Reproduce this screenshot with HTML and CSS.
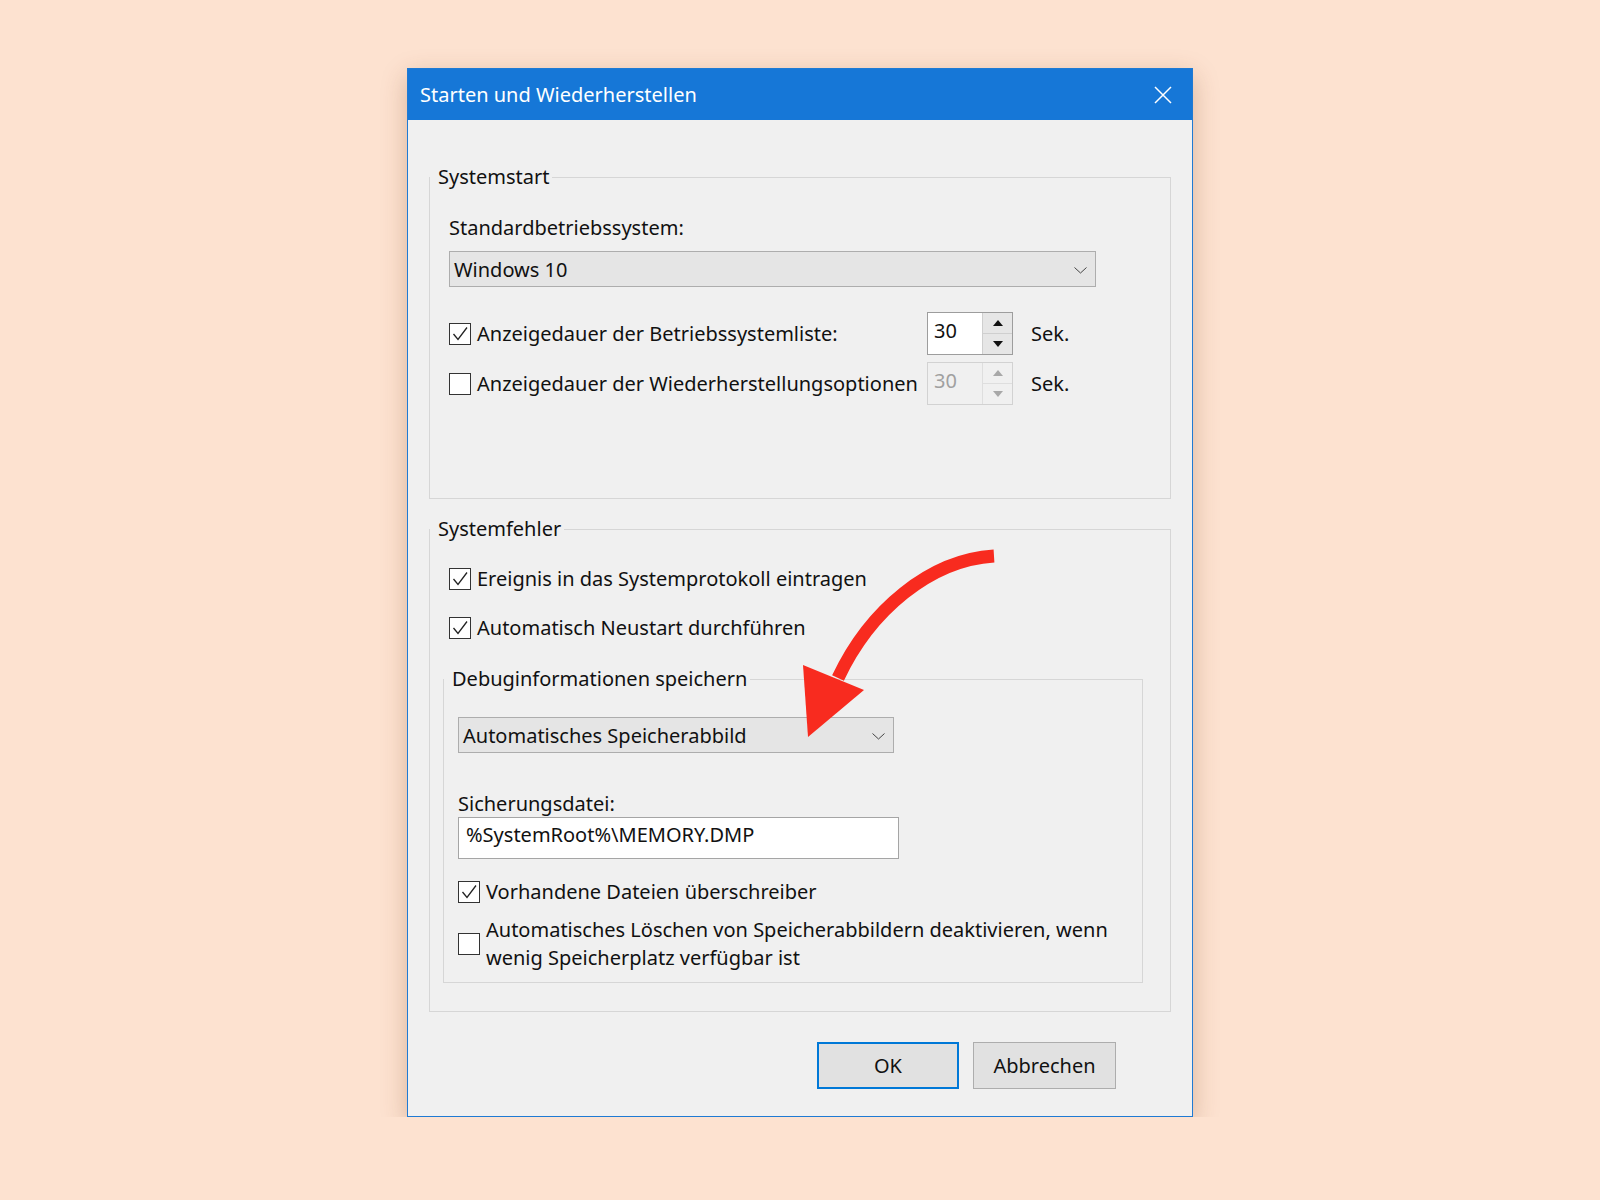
FILE: index.html
```html
<!DOCTYPE html>
<html lang="de">
<head>
    <meta charset="UTF-8">
    <meta name="viewport" content="width=device-width, initial-scale=1.0">
    <title>Starten und Wiederherstellen</title>
    <link rel="stylesheet" href="styles.css">
</head>
<body>

    <div class="dialog">
        <!-- Titelleiste -->
        <div class="titlebar">
            <span class="title">Starten und Wiederherstellen</span>
            <span class="close">
                <svg width="18" height="18" viewBox="0 0 18 18"><path d="M1 1L17 17M17 1L1 17" stroke="#fff" stroke-width="1.5" fill="none"/></svg>
            </span>
        </div>

        <div class="content">
            <!-- Systemstart -->
            <fieldset class="group group-start">
                <legend>Systemstart</legend>
                <div class="group-body">
                    <div class="field-label">Standardbetriebssystem:</div>
                    <div class="combo combo-os">
                        <span>Windows 10</span>
                        <svg class="chevron" width="13" height="7" viewBox="0 0 13 7"><path d="M0.5 0.5L6.5 6L12.5 0.5" stroke="#444" stroke-width="1" fill="none"/></svg>
                    </div>

                    <div class="timeouts">
                        <label class="check-row">
                            <span class="box"><svg width="20" height="20" viewBox="0 0 20 20"><path d="M3.5 10L8 15.5L17 3.5" stroke="#222" stroke-width="1.3" fill="none"/></svg></span>
                            <span>Anzeigedauer der Betriebssystemliste:</span>
                        </label>
                        <div class="spin">
                            <span class="spin-value">30</span>
                            <span class="spin-buttons">
                                <span class="spin-up"><svg width="10" height="6" viewBox="0 0 10 6"><path d="M5 0L10 6H0Z"/></svg></span>
                                <span class="spin-down"><svg width="10" height="6" viewBox="0 0 10 6"><path d="M0 0H10L5 6Z"/></svg></span>
                            </span>
                        </div>
                        <span class="unit">Sek.</span>

                        <label class="check-row">
                            <span class="box"></span>
                            <span>Anzeigedauer der Wiederherstellungsoptionen</span>
                        </label>
                        <div class="spin disabled">
                            <span class="spin-value">30</span>
                            <span class="spin-buttons">
                                <span class="spin-up"><svg width="10" height="6" viewBox="0 0 10 6"><path d="M5 0L10 6H0Z"/></svg></span>
                                <span class="spin-down"><svg width="10" height="6" viewBox="0 0 10 6"><path d="M0 0H10L5 6Z"/></svg></span>
                            </span>
                        </div>
                        <span class="unit">Sek.</span>
                    </div>
                </div>
            </fieldset>

            <!-- Systemfehler -->
            <fieldset class="group group-fault">
                <legend>Systemfehler</legend>
                <div class="group-body">
                    <label class="check-row">
                        <span class="box"><svg width="20" height="20" viewBox="0 0 20 20"><path d="M3.5 10L8 15.5L17 3.5" stroke="#222" stroke-width="1.3" fill="none"/></svg></span>
                        <span>Ereignis in das Systemprotokoll eintragen</span>
                    </label>
                    <label class="check-row row-gap">
                        <span class="box"><svg width="20" height="20" viewBox="0 0 20 20"><path d="M3.5 10L8 15.5L17 3.5" stroke="#222" stroke-width="1.3" fill="none"/></svg></span>
                        <span>Automatisch Neustart durchführen</span>
                    </label>

                    <fieldset class="group group-debug">
                        <legend>Debuginformationen speichern</legend>
                        <div class="group-body">
                            <div class="combo combo-debug">
                                <span>Automatisches Speicherabbild</span>
                                <svg class="chevron" width="13" height="7" viewBox="0 0 13 7"><path d="M0.5 0.5L6.5 6L12.5 0.5" stroke="#444" stroke-width="1" fill="none"/></svg>
                            </div>
                            <div class="field-label dump-label">Sicherungsdatei:</div>
                            <div class="edit">%SystemRoot%\MEMORY.DMP</div>
                            <label class="check-row overwrite">
                                <span class="box"><svg width="20" height="20" viewBox="0 0 20 20"><path d="M3.5 10L8 15.5L17 3.5" stroke="#222" stroke-width="1.3" fill="none"/></svg></span>
                                <span>Vorhandene Dateien überschreiber</span>
                            </label>
                            <label class="check-row multi">
                                <span class="box"></span>
                                <span class="text">Automatisches Löschen von Speicherabbildern deaktivieren, wenn wenig Speicherplatz verfügbar ist</span>
                            </label>
                        </div>
                    </fieldset>
                </div>
            </fieldset>
        </div>

        <div class="footer">
            <button class="btn btn-default">OK</button>
            <button class="btn">Abbrechen</button>
        </div>
    </div>

    <!-- roter Hinweispfeil -->
    <svg class="arrow" width="220" height="210" viewBox="0 0 220 210">
        <path d="M204 16C140 20 80 70 48 138" stroke="#f82b1f" stroke-width="13" fill="none"/>
        <path d="M13 125L74 150L18 197Z" fill="#f82b1f"/>
    </svg>

</body>
</html>
```

FILE: styles.css
```css
body {
    margin: 0;
    background-color: #fde2d0;
    font-family: "Noto Sans", "Open Sans", sans-serif;
    font-size: 20px;
    line-height: 24px;
    color: #111;
}

.dialog {
    width: 786px;
    margin: 68px 0 0 407px;
    box-sizing: border-box;
    border: 1px solid #1f7ad3;
    background-color: #f0f0f0;
    box-shadow: 0 8px 24px rgba(120, 60, 20, 0.28);
}

.titlebar {
    height: 51px;
    display: flex;
    align-items: center;
    justify-content: space-between;
    padding: 0 20px 0 12px;
    background-color: #1677d7;
    color: #fff;
}

.close {
    display: flex;
}

.content {
    padding: 45px 21px 0;
}

/* Gruppenrahmen */
.group {
    margin: 0;
    padding: 0;
    min-width: 0;
    border: 1px solid #d6d6d6;
}

.group legend {
    padding: 0 3px 0 8px;
    line-height: 24px;
}

.group-start .group-body {
    padding: 27px 21px 93px 19px;
}

.group-fault {
    margin-top: 18px;
}

.group-fault > .group-body {
    padding: 26px 21px 28px 19px;
}

.group-debug {
    width: 700px;
    box-sizing: border-box;
    margin: 27px 0 0 -6px;
}

.group-debug .group-body {
    padding: 0 14px 10px 14px;
}

/* Auswahlfelder */
.combo {
    display: flex;
    align-items: center;
    justify-content: space-between;
    height: 36px;
    box-sizing: border-box;
    padding: 2px 8px 0 4px;
    border: 1px solid #adadad;
    background-color: #e5e5e5;
}

.combo-os {
    width: 647px;
    margin-top: 11px;
}

.combo-debug {
    width: 436px;
    margin-top: 26px;
}

.dump-label {
    margin-top: 39px;
}

.edit {
    width: 441px;
    height: 42px;
    box-sizing: border-box;
    margin-top: 1px;
    padding: 5px 7px 0;
    border: 1px solid #a5a5a5;
    background-color: #fff;
}

/* Kontrollkästchen */
.check-row {
    display: flex;
    align-items: center;
    gap: 6px;
    white-space: nowrap;
}

.row-gap {
    margin-top: 25px;
}

.overwrite {
    margin-top: 21px;
}

.multi {
    margin-top: 12px;
    white-space: normal;
}

.multi .text {
    width: 640px;
    line-height: 28px;
}

.box {
    width: 22px;
    height: 22px;
    flex: none;
    box-sizing: border-box;
    display: flex;
    align-items: center;
    justify-content: center;
    border: 1px solid #333;
    background-color: #fff;
}

/* Anzeigedauer mit Drehfeldern */
.timeouts {
    display: grid;
    grid-template-columns: 478px 86px auto;
    grid-auto-rows: 43px;
    row-gap: 7px;
    align-items: center;
    margin-top: 25px;
}

.unit {
    margin-left: 18px;
}

.spin {
    display: flex;
    height: 43px;
    box-sizing: border-box;
    border: 1px solid #9d9d9d;
    background-color: #fff;
}

.spin-value {
    flex: 1;
    display: flex;
    align-items: center;
    padding: 0 0 5px 6px;
}

.spin-buttons {
    width: 29px;
    display: flex;
    flex-direction: column;
    border-left: 1px solid #cfcfcf;
    background-color: #e6e6e6;
}

.spin-up,
.spin-down {
    flex: 1;
    display: flex;
    align-items: center;
    justify-content: center;
    fill: #111;
}

.spin-up {
    border-bottom: 1px solid #cfcfcf;
}

.spin.disabled {
    border-color: #d2d2d2;
    background-color: #f0f0f0;
    color: #a0a0a0;
}

.spin.disabled .spin-buttons {
    border-left-color: #dedede;
    background-color: #f0f0f0;
}

.spin.disabled .spin-up {
    border-bottom-color: #dedede;
}

.spin.disabled .spin-up,
.spin.disabled .spin-down {
    fill: #a8a8a8;
}

/* Schaltflächen */
.footer {
    display: flex;
    justify-content: flex-end;
    gap: 14px;
    padding: 30px 76px 27px 0;
}

.btn {
    width: 143px;
    height: 47px;
    box-sizing: border-box;
    border: 1px solid #adadad;
    background-color: #e1e1e1;
    font: inherit;
    color: #111;
    padding: 0;
}

.btn-default {
    width: 142px;
    border: 2px solid #0078d7;
}

.arrow {
    position: absolute;
    left: 790px;
    top: 540px;
}
```
